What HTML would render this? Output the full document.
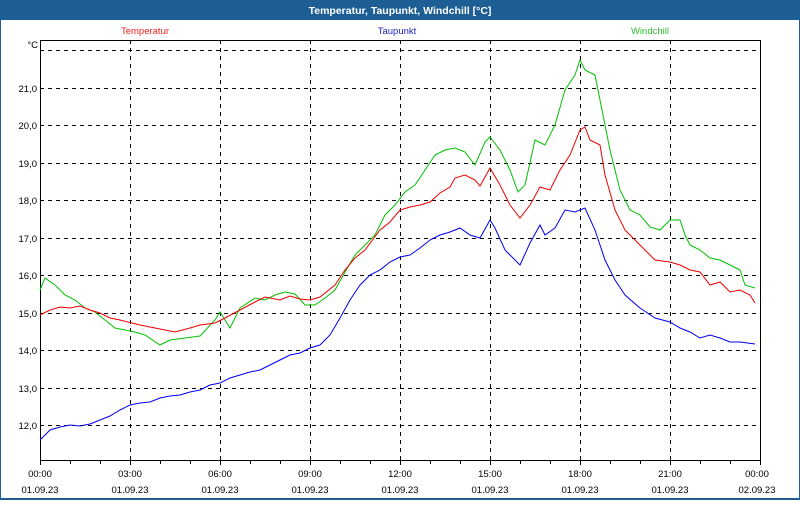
<!DOCTYPE html>
<html><head><meta charset="utf-8"><style>
body{margin:0;width:800px;height:500px;overflow:hidden;background:#fff;font-family:"Liberation Sans",sans-serif;}
</style></head><body>
<svg width="800" height="500" xmlns="http://www.w3.org/2000/svg" font-family="Liberation Sans, sans-serif" font-size="9.5">
<rect x="0" y="0" width="800" height="500" fill="#fff"/>
<rect x="0" y="0" width="800" height="20" fill="#1d5f95"/>
<rect x="0" y="0" width="1" height="500" fill="#1d5f95"/>
<rect x="799" y="0" width="1" height="500" fill="#1d5f95"/>
<rect x="0" y="498" width="800" height="2" fill="#1d5f95"/>
<text x="400" y="14" fill="#fff" font-weight="bold" font-size="10.5" text-anchor="middle">Temperatur, Taupunkt, Windchill [°C]</text>
<text x="145" y="34" fill="#f02020" text-anchor="middle">Temperatur</text>
<text x="397" y="34" fill="#2020c0" text-anchor="middle">Taupunkt</text>
<text x="650" y="34" fill="#30c030" text-anchor="middle">Windchill</text>
<g stroke="#000" stroke-width="1" stroke-dasharray="4,4" fill="none">
<path d="M40 50.5H760M40 88.5H760M40 125.5H760M40 163.5H760M40 200.5H760M40 238.5H760M40 275.5H760M40 313.5H760M40 350.5H760M40 388.5H760M40 425.5H760"/>
<path d="M130.5 40V460M220.5 40V460M310.5 40V460M400.5 40V460M490.5 40V460M580.5 40V460M670.5 40V460"/>
</g>
<rect x="40.5" y="40.5" width="720" height="420" fill="none" stroke="#000"/>
<g stroke="#000"><path d="M40.5 460V465M70.5 460V464M100.5 460V464M130.5 460V465M160.5 460V464M190.5 460V464M220.5 460V465M250.5 460V464M280.5 460V464M310.5 460V465M340.5 460V464M370.5 460V464M400.5 460V465M430.5 460V464M460.5 460V464M490.5 460V465M520.5 460V464M550.5 460V464M580.5 460V465M610.5 460V464M640.5 460V464M670.5 460V465M700.5 460V464M730.5 460V464M760.5 460V465"/></g>
<g text-anchor="end" fill="#000">
<text x="38" y="48">°C</text>
<text x="37" y="92">21,0</text><text x="37" y="129">20,0</text><text x="37" y="167">19,0</text><text x="37" y="204">18,0</text><text x="37" y="242">17,0</text><text x="37" y="279">16,0</text><text x="37" y="317">15,0</text><text x="37" y="354">14,0</text><text x="37" y="392">13,0</text><text x="37" y="429">12,0</text>
</g>
<g text-anchor="middle" fill="#000">
<text x="40" y="477">00:00</text><text x="130" y="477">03:00</text><text x="220" y="477">06:00</text><text x="310" y="477">09:00</text><text x="400" y="477">12:00</text><text x="490" y="477">15:00</text><text x="580" y="477">18:00</text><text x="670" y="477">21:00</text><text x="757" y="477">00:00</text>
<text x="40" y="493">01.09.23</text><text x="130" y="493">01.09.23</text><text x="220" y="493">01.09.23</text><text x="310" y="493">01.09.23</text><text x="400" y="493">01.09.23</text><text x="490" y="493">01.09.23</text><text x="580" y="493">01.09.23</text><text x="670" y="493">01.09.23</text><text x="757" y="493">02.09.23</text>
</g>
<polyline fill="none" stroke="#00c000" points="40,290 45,278 55,285 65,295 75,300 85,308 95,312 105,320 115,328 125,330 135,332 145,335 160,345 170,340 185,338 200,336 215,320 220,312 230,328 240,308 255,298 265,300 275,295 285,292 295,294 305,305 315,305 325,298 335,290 345,272 355,255 365,245 375,235 385,215 395,205 405,192 415,185 425,170 435,155 445,150 455,148 465,152 475,165 485,142 490,137 500,150 510,170 518,192 525,185 535,140 545,145 555,125 565,90 575,75 580,60 585,70 595,75 600,100 610,150 620,190 630,210 640,215 650,227 660,230 670,220 680,220 685,235 690,245 700,250 710,258 720,260 730,265 740,270 745,285 755,288"/>
<polyline fill="none" stroke="#f00000" points="40,315 50,310 60,307 70,308 80,306 90,310 100,313 110,318 120,320 140,325 160,329 175,332 190,328 200,325 215,323 225,318 240,310 255,302 265,297 280,300 290,296 300,299 310,300 320,297 335,285 345,270 355,258 365,250 380,230 390,222 400,210 410,207 420,205 430,202 440,193 450,187 455,178 465,175 475,180 480,186 490,168 500,185 510,205 520,218 530,205 540,187 550,190 560,170 570,155 580,130 585,127 590,140 600,145 605,175 615,210 625,230 640,245 655,260 670,262 680,265 690,270 700,272 710,285 720,282 730,292 740,290 750,295 755,303"/>
<polyline fill="none" stroke="#0000f0" points="40,440 50,430 60,427 70,425 80,426 90,424 100,420 110,416 120,410 130,405 140,403 150,402 160,398 170,396 180,395 190,392 200,390 210,385 220,383 230,378 240,375 250,372 260,370 270,365 280,360 290,355 300,353 310,348 320,345 330,335 340,318 350,300 360,285 370,275 380,270 390,262 400,257 410,255 420,248 430,240 440,235 450,232 460,228 470,235 480,238 490,220 495,228 505,250 520,265 530,243 540,225 545,235 555,228 565,210 575,212 585,208 595,230 605,260 615,280 625,295 640,308 655,318 670,322 680,328 690,332 700,338 710,335 720,338 730,342 740,342 755,344"/>
</svg>
</body></html>
